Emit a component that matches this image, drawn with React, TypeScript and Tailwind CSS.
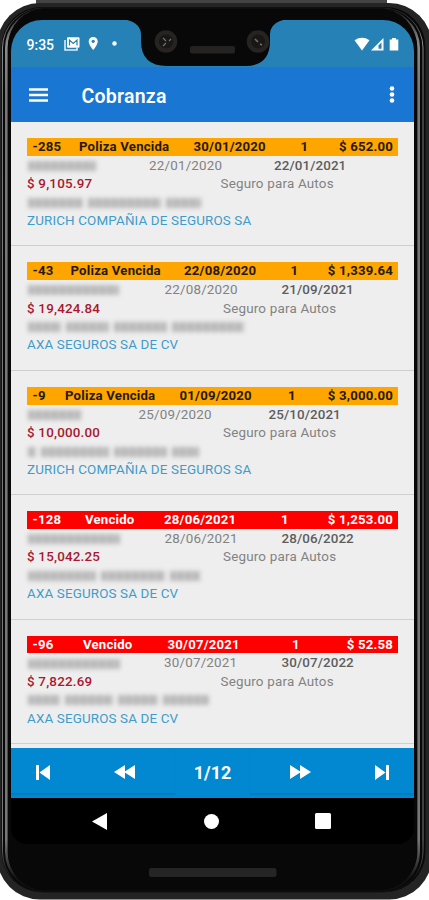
import React from 'react';

type Policy = {
  days: string; state: string; due: string; n: string; total: string;
  cols: string; late: boolean;
  idWords: string[]; from: string; to: string; dateCols: string;
  amount: string; amountCols: string; nameWords: string[]; insurer: string;
};

const policies: Policy[] = [
  { days: '-285', state: 'Poliza Vencida', due: '30/01/2020', n: '1', total: '$ 652.00', cols: 'grid-cols-[46.5px_114.5px_107px_1fr_auto]', late: false,
    idWords: ['w-[68px]'], from: '22/01/2020', to: '22/01/2021', dateCols: 'grid-cols-[122px_125px_1fr]',
    amount: '$ 9,105.97', amountCols: 'grid-cols-[193.5px_1fr]', nameWords: ['w-[55px]', 'w-[73px]', 'w-[35px]'], insurer: 'ZURICH COMPAÑIA DE SEGUROS SA' },
  { days: '-43', state: 'Poliza Vencida', due: '22/08/2020', n: '1', total: '$ 1,339.64', cols: 'grid-cols-[38px_113.5px_106.5px_1fr_auto]', late: false,
    idWords: ['w-[91px]'], from: '22/08/2020', to: '21/09/2021', dateCols: 'grid-cols-[137.5px_117px_1fr]',
    amount: '$ 19,424.84', amountCols: 'grid-cols-[196px_1fr]', nameWords: ['w-[33px]', 'w-[43px]', 'w-[53px]', 'w-[72px]'], insurer: 'AXA SEGUROS SA DE CV' },
  { days: '-9', state: 'Poliza Vencida', due: '01/09/2020', n: '1', total: '$ 3,000.00', cols: 'grid-cols-[32.5px_114.5px_108.5px_1fr_auto]', late: false,
    idWords: ['w-[53px]'], from: '25/09/2020', to: '25/10/2021', dateCols: 'grid-cols-[111.5px_130px_1fr]',
    amount: '$ 10,000.00', amountCols: 'grid-cols-[196px_1fr]', nameWords: ['w-[8px]', 'w-[68px]', 'w-[53px]', 'w-[27px]'], insurer: 'ZURICH COMPAÑIA DE SEGUROS SA' },
  { days: '-128', state: 'Vencido', due: '28/06/2021', n: '1', total: '$ 1,253.00', cols: 'grid-cols-[52.5px_79px_117px_1fr_auto]', late: true,
    idWords: ['w-[92px]'], from: '28/06/2021', to: '28/06/2022', dateCols: 'grid-cols-[137.5px_117px_1fr]',
    amount: '$ 15,042.25', amountCols: 'grid-cols-[196px_1fr]', nameWords: ['w-[68px]', 'w-[64px]', 'w-[30px]'], insurer: 'AXA SEGUROS SA DE CV' },
  { days: '-96', state: 'Vencido', due: '30/07/2021', n: '1', total: '$ 52.58', cols: 'grid-cols-[50.5px_84.5px_124.5px_1fr_auto]', late: true,
    idWords: ['w-[92px]'], from: '30/07/2021', to: '30/07/2022', dateCols: 'grid-cols-[137px_117.5px_1fr]',
    amount: '$ 7,822.69', amountCols: 'grid-cols-[193.5px_1fr]', nameWords: ['w-[32px]', 'w-[48px]', 'w-[40px]', 'w-[46px]'], insurer: 'AXA SEGUROS SA DE CV' },
];

function Obscured({ words }: { words: string[] }) {
  return (
    <div aria-hidden="true" className="flex gap-[5px] pl-px blur-[2px]">
      {words.map((w, i) => (
        <span key={i} className={`${w} h-[10px] bg-[repeating-linear-gradient(90deg,#b8b8b8_0_5px,#c4c4c4_5px_8px)]`} />
      ))}
    </div>
  );
}

function PolicyRow({ p }: { p: Policy }) {
  return (
    <li className="h-[124.4px] shrink-0 border-b border-[#cfcfcf] pt-[16px] pr-[16px] pl-[16px] text-[13.4px] leading-[18.4px] tracking-[0.2px] text-[#828282]">
      <div className={`grid ${p.cols} h-[17.8px] pr-[5px] pl-[5.5px] text-[13.2px] font-bold whitespace-nowrap ${p.late ? 'bg-[#ff0000] text-white' : 'bg-[#ffa500] text-[#261a08]'}`}>
        <span>{p.days}</span><span>{p.state}</span><span>{p.due}</span><span>{p.n}</span><span>{p.total}</span>
      </div>
      <div className={`grid ${p.dateCols} mt-[1px] h-[18.4px] items-center`}>
        <Obscured words={p.idWords} />
        <span>{p.from}</span>
        <span className="font-medium tracking-[0.1px] text-[#5d5d5d]">{p.to}</span>
      </div>
      <div className={`grid ${p.amountCols} h-[18.4px]`}>
        <span className="font-medium text-[#a81830]">{p.amount}</span>
        <span>Seguro para Autos</span>
      </div>
      <div className="flex h-[18.4px] items-center"><Obscured words={p.nameWords} /></div>
      <div className="tracking-[0.15px] text-[#3e9cca]">{p.insurer}</div>
    </li>
  );
}

function PhoneFrame() {
  return (
    <svg className="absolute inset-0" width="429" height="900" viewBox="0 0 429 900" fill="none">
      <defs>
        <linearGradient id="rim" gradientUnits="userSpaceOnUse" x1="0" y1="8" x2="0" y2="892">
          <stop offset="0" stopColor="#1a1a1a" />
          <stop offset="0.04" stopColor="#8a8a8a" />
          <stop offset="0.1" stopColor="#777" />
          <stop offset="0.94" stopColor="#777" />
          <stop offset="0.985" stopColor="#111" />
        </linearGradient>
      </defs>
      <path d="M36 0H387V5H36Z" fill="#444" />
      <rect x="-3" y="3" width="435" height="896.5" rx="43" fill="#242424" />
      <rect x="1.5" y="7" width="424" height="885" rx="40" fill="#080808" />
      <rect x="2.5" y="8" width="420.5" height="884" rx="40" stroke="url(#rim)" strokeWidth="1" />
      <rect x="6.3" y="10" width="412.4" height="880" rx="38" stroke="url(#rim)" strokeWidth="2.6" />
      <rect x="8.3" y="8.5" width="408" height="882" rx="37" fill="#080808" />
      <rect x="149" y="868" width="127.5" height="9" rx="2.5" fill="#252525" />
    </svg>
  );
}

function Notch() {
  return (
    <svg className="absolute top-0 left-[108px]" width="186" height="46" viewBox="0 0 186 46">
      <path d="M2 -1Q22 1 22 15V21Q22 46 48 46H126Q151 46 151 21V15Q151 1 170 -1Z" fill="#080808" />
      <circle cx="47" cy="21.5" r="11.3" fill="#262321" />
      <circle cx="47" cy="21.5" r="7" fill="#191716" />
      <path d="M44 18l3 3M50 21l2-2M44 26l3-3" stroke="#77706a" strokeWidth="1.2" />
      <rect x="71" y="26" width="45" height="7.5" rx="2" fill="#242322" />
      <circle cx="139" cy="21.5" r="11.3" fill="#262321" />
      <circle cx="139" cy="21.5" r="7" fill="#191716" />
      <path d="M136 19l3 3M141 24l2 1" stroke="#77706a" strokeWidth="1.5" />
    </svg>
  );
}

function StatusBar() {
  return (
    <div className="relative flex h-[47px] shrink-0 items-start bg-[#2682b6] pt-[15px] text-white">
      <span className="mt-[0.5px] ml-[15.5px] w-[37px] text-[14px] leading-[18px] font-medium">9:35</span>
      <svg className="mt-[1px]" width="60" height="16" viewBox="0 0 60 16">
        <path d="M1 4V14H13V12" stroke="white" strokeWidth="1.6" fill="none" opacity=".85" />
        <rect x="3" y="1.2" width="12.5" height="10.5" rx="1" fill="white" />
        <path d="M5.5 9.5V4l3.7 3.4L13 4v5.5" stroke="#2682b6" strokeWidth="1.2" fill="none" />
        <path d="M29.2 1c-2.8 0-4.5 2-4.5 4.5 0 3.3 4.5 8.5 4.5 8.5s4.5-5.2 4.5-8.5C33.7 3 32 1 29.2 1z" fill="white" />
        <circle cx="29.2" cy="5.3" r="1.6" fill="#2682b6" />
        <circle cx="50.5" cy="7.5" r="2.2" fill="white" />
      </svg>
      <Notch />
      <svg className="mt-[1.5px] mr-[14px] ml-auto" width="46" height="15" viewBox="0 0 46 15">
        <path d="M.5 3.2Q8 -1.5 15.5 3.2L8 13.5Z" fill="white" />
        <path d="M17 13.5L29.5 1V13.5Z" fill="white" />
        <path d="M24.5 11.8V8.5L27.5 5.5V11.8Z" fill="#2682b6" />
        <path d="M38 1h4v1.5h2.3V13.5H35.7V2.5H38Z" fill="white" />
      </svg>
    </div>
  );
}

function AppHeader() {
  return (
    <header className="flex h-[55px] shrink-0 items-center bg-[#1976d2] pr-[19.5px] pl-[18px] text-white">
      <svg width="19" height="14" viewBox="0 0 19 14"><path d="M0 1.5H19M0 7H19M0 12.5H19" stroke="white" strokeWidth="2.3" /></svg>
      <h1 className="mt-[4px] ml-[33.5px] text-[19.5px] leading-6 font-semibold tracking-[0.25px]">Cobranza</h1>
      <svg className="ml-auto" width="6" height="17" viewBox="0 0 6 17" fill="white"><circle cx="3" cy="2.5" r="2.3" /><circle cx="3" cy="8.5" r="2.3" /><circle cx="3" cy="14.5" r="2.3" /></svg>
    </header>
  );
}

function Pager() {
  return (
    <nav className="flex h-[50.5px] shrink-0 items-start bg-[#0288d1] text-white">
      <div className="flex h-[46px] w-[164px] items-center border-b border-[#0279bb] pt-[4px] pl-[24.5px] shadow-[0_1px_1px_#027fc3]">
        <svg width="14" height="15" viewBox="0 0 14 15" fill="white"><path d="M0 0h3v15H0zM14 0v15L3.5 7.5z" /></svg>
        <svg className="ml-[64.5px]" width="21" height="14" viewBox="0 0 21 14" fill="white"><path d="M11 0v14L0 7zM21 0v14L10 7z" /></svg>
      </div>
      <span className="w-[75px] pt-[13px] text-center text-[18px] leading-6 font-bold">1/12</span>
      <div className="flex h-[46px] flex-1 items-center border-b border-[#0279bb] pt-[4px] pl-[40px] shadow-[0_1px_1px_#027fc3]">
        <svg width="21" height="14" viewBox="0 0 21 14" fill="white"><path d="M0 0v14L11 7zM10 0v14L21 7z" /></svg>
        <svg className="ml-[64px]" width="14" height="15" viewBox="0 0 14 15" fill="white"><path d="M11 0h3v15h-3zM0 0v15L10.5 7.5z" /></svg>
      </div>
    </nav>
  );
}

function SystemBar() {
  return (
    <div className="flex h-[46px] shrink-0 items-center bg-black pl-[81px]">
      <svg width="15" height="17" viewBox="0 0 15 17"><path d="M15 0v17L0 8.5z" fill="white" /></svg>
      <span className="ml-[97px] size-[15px] rounded-full bg-white" />
      <span className="ml-[96px] size-[16px] rounded-[1.5px] bg-white" />
    </div>
  );
}

export default function App() {
  return (
    <div className="relative h-[900px] w-[429px] overflow-hidden bg-white pt-[20px] pl-[11px] font-[Roboto,'Liberation_Sans',sans-serif]">
      <PhoneFrame />
      <main className="relative flex h-[824px] w-[403px] flex-col overflow-hidden rounded-t-[31px] rounded-b-[16px]">
        <StatusBar />
        <AppHeader />
        <ul className="flex h-[625.5px] shrink-0 flex-col overflow-hidden bg-[#eee]">
          {policies.map((p) => <PolicyRow key={p.days} p={p} />)}
        </ul>
        <Pager />
        <SystemBar />
      </main>
    </div>
  );
}
